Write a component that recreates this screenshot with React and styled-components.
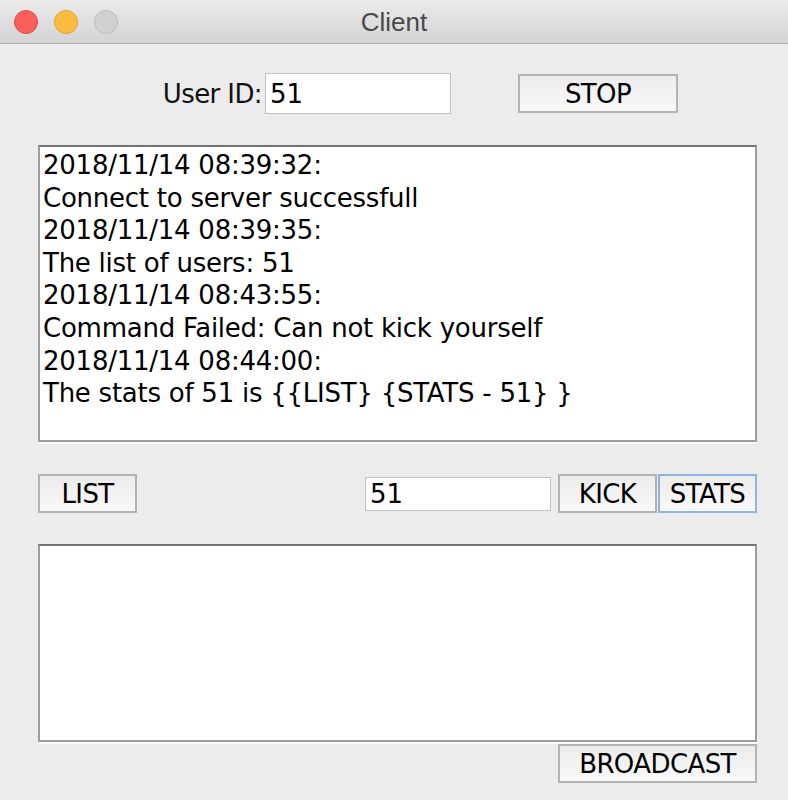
import React from "react";
import styled, { createGlobalStyle } from "styled-components";

const Global = createGlobalStyle`
  html, body { margin: 0; padding: 0; background: #ececec; }
  body { font-family: "DejaVu Sans", "Liberation Sans", sans-serif; }
`;

const Window = styled.div`
  width: 788px;
  height: 800px;
  background: #ececec;
  overflow: hidden;
  display: flex;
  flex-direction: column;
`;

const TitleBar = styled.div`
  height: 43px;
  flex: 0 0 auto;
  border-bottom: 1px solid #b1b1b1;
  background: linear-gradient(#ebebeb, #d3d3d3);
  border-radius: 6px 6px 0 0;
  display: grid;
  grid-template-columns: 1fr auto 1fr;
  align-items: center;
`;

const Lights = styled.div`
  display: flex;
  gap: 16px;
  padding-left: 14px;
`;

const Light = styled.span`
  width: 22px;
  height: 22px;
  border-radius: 50%;
  background: ${(p) => p.$fill};
  border: 1px solid ${(p) => p.$edge};
`;

const Title = styled.div`
  font-family: "Liberation Sans", Arial, sans-serif;
  font-size: 26px;
  color: #4a4a4a;
  line-height: 43px;
  padding-top: 1px;
`;

const Content = styled.div`
  display: flex;
  flex-direction: column;
  padding: 0 31px 0 38px;
`;

const TopRow = styled.div`
  margin-top: 29px;
  height: 41px;
  display: flex;
  align-items: center;
`;

const Label = styled.span`
  width: 224px;
  text-align: right;
  font-size: 26px;
  letter-spacing: -0.6px;
  color: #111;
`;

const Field = styled.div`
  box-sizing: border-box;
  width: 186px;
  height: ${(p) => p.$h}px;
  margin-left: ${(p) => p.$ml}px;
  background: #fff;
  border: 1px solid #c2c2c2;
  padding: 0 4px;
  display: flex;
  align-items: center;
  font-size: 26px;
  color: #000;
`;

const Button = styled.div`
  box-sizing: border-box;
  width: ${(p) => p.$w}px;
  height: 39px;
  margin-left: ${(p) => p.$ml || 0}px;
  border: 2px solid ${(p) => (p.$focus ? "#8fb3e4" : "#b3b3b3")};
  background: linear-gradient(#ececec, #f9f9f9);
  display: flex;
  align-items: center;
  justify-content: center;
  font-size: 26px;
  letter-spacing: -0.6px;
  color: #000;
  padding-top: 1px;
`;

const TextArea = styled.div`
  box-sizing: border-box;
  height: ${(p) => p.$h}px;
  margin-top: ${(p) => p.$mt}px;
  background: #fff;
  border: 2px solid #9c9c9c;
  border-top-color: #747474;
  box-shadow: 0 2px 0 #fbfbfb;
  padding: 2px 3px;
  font-size: 26px;
  line-height: 32.6px;
  letter-spacing: -0.25px;
  color: #000;
  white-space: pre;
`;

const ActionRow = styled.div`
  margin-top: 32px;
  height: 39px;
  display: flex;
  align-items: center;
`;

const Spacer = styled.div`
  flex: 1;
`;

const BottomRow = styled.div`
  margin-top: 2px;
  display: flex;
  justify-content: flex-end;
`;

const log = [
  "2018/11/14 08:39:32:",
  "Connect to server successfull",
  "2018/11/14 08:39:35:",
  "The list of users: 51",
  "2018/11/14 08:43:55:",
  "Command Failed: Can not kick yourself",
  "2018/11/14 08:44:00:",
  "The stats of 51 is {{LIST} {STATS - 51} }",
];

export default function App() {
  return (
    <>
      <Global />
      <Window>
        <TitleBar>
          <Lights>
            <Light $fill="#fc605c" $edge="#df4944" />
            <Light $fill="#fdbc40" $edge="#dea034" />
            <Light $fill="#d1d1d1" $edge="#bcbcbc" />
          </Lights>
          <Title>Client</Title>
          <div />
        </TitleBar>
        <Content>
          <TopRow>
            <Label>User ID:</Label>
            <Field $h={41} $ml={3}>51</Field>
            <Button $w={160} $ml={67}>STOP</Button>
          </TopRow>
          <TextArea $h={297} $mt={31}>
            {log.map((l, i) => (
              <div key={i}>{l}</div>
            ))}
          </TextArea>
          <ActionRow>
            <Button $w={99}>LIST</Button>
            <Spacer />
            <Field $h={34} $ml={0}>51</Field>
            <Button $w={99} $ml={7}>KICK</Button>
            <Button $w={99} $ml={1} $focus>STATS</Button>
          </ActionRow>
          <TextArea $h={198} $mt={31} />
          <BottomRow>
            <Button $w={199}>BROADCAST</Button>
          </BottomRow>
        </Content>
      </Window>
    </>
  );
}
